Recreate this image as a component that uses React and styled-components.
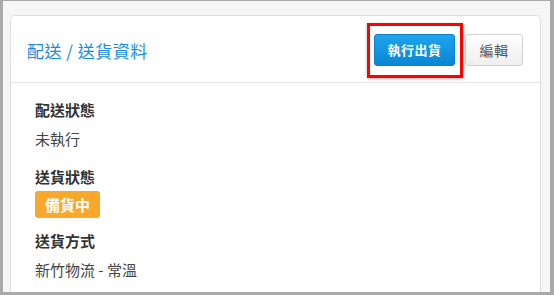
import React from "react";
import styled, { createGlobalStyle } from "styled-components";

const Global = createGlobalStyle`
  html, body { margin: 0; padding: 0; }
  body { font-family: "Noto Sans CJK TC", "Noto Sans", sans-serif; }
`;

const Frame = styled.div`
  box-sizing: border-box;
  width: 554px;
  height: 295px;
  overflow: hidden;
  background: #f6f6f6;
  border-style: solid;
  border-color: #a9a9a9;
  border-width: 1px 4px 3px 3px;
  padding: 14px 9px 0 7px;
`;

const Card = styled.section`
  background: #fff;
  border: 1px solid #dedede;
  border-bottom: none;
  border-radius: 5px 5px 0 0;
  height: 300px;
`;

const Header = styled.header`
  display: flex;
  align-items: center;
  justify-content: space-between;
  height: 67px;
  box-sizing: border-box;
  padding: 0 17px 0 16px;
  border-bottom: 1px solid #e3e3e3;
`;

const Title = styled.h2`
  margin: 3px 0 0;
  font-size: 17px;
  font-weight: 400;
  color: #168ddb;
  line-height: 22px;
  letter-spacing: 0.5px;
  white-space: nowrap;
`;

const Actions = styled.div`
  display: flex;
  align-items: center;
  gap: 10px;
  margin-top: 1px;
`;

const Highlight = styled.div`
  position: relative;
  display: flex;
  &::after {
    content: "";
    position: absolute;
    left: -7px;
    right: -8px;
    top: -11px;
    bottom: -12px;
    border: 3px solid #f00;
    box-shadow: 0 1px 3px rgba(0,0,0,0.3);
    pointer-events: none;
  }
`;

const Button = styled.button`
  box-sizing: border-box;
  height: 32px;
  padding: 0;
  width: ${(p) => (p.$primary ? "81px" : "58px")};
  white-space: nowrap;
  font-family: inherit;
  font-size: ${(p) => (p.$primary ? "13px" : "14px")};
  font-weight: ${(p) => (p.$primary ? 700 : 400)};
  border-radius: 3px;
  cursor: pointer;
  color: ${(p) => (p.$primary ? "#fff" : "#555")};
  border: 1px solid ${(p) => (p.$primary ? "#0b7fc7" : "#cfcfcf")};
  background: ${(p) =>
    p.$primary
      ? "linear-gradient(#1ea4ee, #0a86d3)"
      : "linear-gradient(#ffffff, #efefef)"};
  letter-spacing: 0.5px;
`;

const Body = styled.div`
  padding: 17px 24px 0;
  display: flex;
  flex-direction: column;
`;

const Label = styled.h3`
  margin: 0;
  font-size: 15px;
  font-weight: 700;
  color: #333;
  line-height: 20px;
`;

const Value = styled.p`
  margin: 9px 0 18px;
  font-size: 15px;
  color: #444;
  line-height: 20px;
`;

const Badge = styled.span`
  align-self: flex-start;
  margin: 4px 0 13px;
  padding: 0 10px;
  height: 27px;
  line-height: 27px;
  background: #f8a92b;
  color: #fff;
  font-weight: 700;
  font-size: 15px;
  border-radius: 3px;
`;

export default function App() {
  return (
    <>
      <Global />
      <Frame>
        <Card>
          <Header>
            <Title>配送 / 送貨資料</Title>
            <Actions>
              <Highlight>
                <Button $primary>執行出貨</Button>
              </Highlight>
              <Button>編輯</Button>
            </Actions>
          </Header>
          <Body>
            <Label>配送狀態</Label>
            <Value>未執行</Value>
            <Label>送貨狀態</Label>
            <Badge>備貨中</Badge>
            <Label>送貨方式</Label>
            <Value>新竹物流 - 常溫</Value>
          </Body>
        </Card>
      </Frame>
    </>
  );
}
